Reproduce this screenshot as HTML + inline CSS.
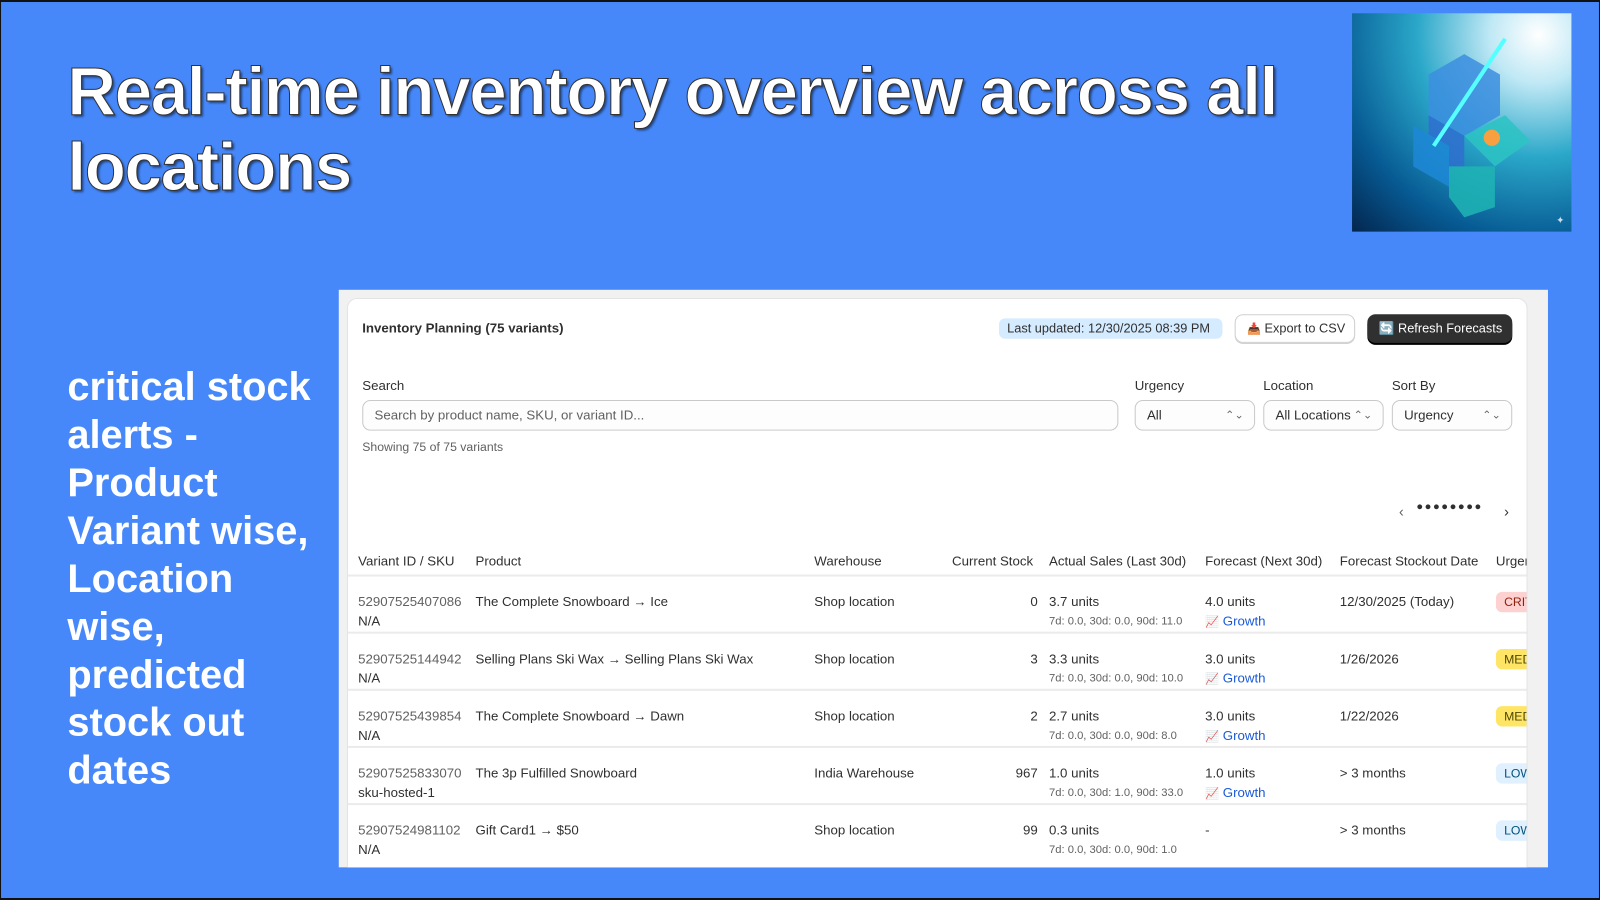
<!DOCTYPE html>
<html><head><meta charset="utf-8"><style>
*{box-sizing:border-box;margin:0;padding:0}
html,body{width:1600px;height:900px;overflow:hidden;background:#000}
#w{position:absolute;left:0;top:0;width:1568px;height:882px;transform:scale(1.020408);transform-origin:0 0;background:#4688fa;font-family:"Liberation Sans",sans-serif;overflow:hidden;box-shadow:inset 0 2px 0 #111,inset 1px 0 0 #111,inset -1px 0 0 #111,inset 0 -2px 0 #111}
.t{position:absolute;left:66px;top:52px;font-size:66px;font-weight:bold;color:#fff;line-height:74px;letter-spacing:-1.3px;-webkit-text-stroke:1px #333;text-shadow:2px 2px 2px rgba(0,0,0,.5)}
.img{position:absolute;left:1325px;top:13px;width:215px;height:214px;background:radial-gradient(circle at 85% 10%,#fff 0%,#bfe8f5 18%,#2aa7c9 45%,#075b94 75%,#03264f 100%)}
.side{position:absolute;left:66px;top:356px;font-size:39px;font-weight:bold;color:#fff;line-height:47px}
.panel{position:absolute;left:332px;top:284px;width:1185px;height:566px;background:#f1f1f1;overflow:hidden}
.card{position:absolute;left:8px;top:8px;width:1157px;height:600px;background:#fff;border-radius:10px;border:1px solid #e3e3e3;overflow:hidden;font-size:13px;color:#303030}
.a{position:absolute;white-space:nowrap}
.inp{position:absolute;top:99px;height:30px;border:1px solid #c9c9c9;border-radius:8px;background:#fdfdfd;padding:0 11px;line-height:28px;font-size:13px}
.arr{position:absolute;right:10px;top:0;color:#666;font-size:11px}
.hr{position:absolute;left:0;width:1157px;height:2px;background:#ebebeb}
.g{color:#616161}
.s{font-size:11px;color:#616161}
.gr{color:#1b5ad8}
.b{position:absolute;left:1125px;height:20px;padding:0 8px;border-radius:6px;font-size:12px;line-height:20px}
</style></head><body><div id="w">
<div class="t">Real-time inventory overview across all<br>locations</div>
<div class="img"><svg width="215" height="214" viewBox="0 0 215 214"><g opacity=".85"><polygon points="110,40 145,60 145,100 110,120 75,100 75,60" fill="#3d8fe0"/><polygon points="75,100 110,120 110,160 75,140" fill="#2f6fd0"/><polygon points="110,120 150,100 175,125 140,150" fill="#2cc4c4"/><polygon points="60,110 95,130 95,170 60,150" fill="#1e88d8"/><polygon points="95,150 140,150 140,190 110,200 95,180" fill="#1fb5b5"/></g><path d="M80 130 L120 70 L150 25" stroke="#5ff" stroke-width="4" fill="none"/><circle cx="137" cy="122" r="8" fill="#f8a040"/><text x="200" y="206" fill="#cde" font-size="10">✦</text></svg></div>
<div class="side">critical stock<br>alerts -<br>Product<br>Variant wise,<br>Location<br>wise,<br>predicted<br>stock out<br>dates</div>
<div class="panel"><div class="card">
<div class="a" style="left:14px;top:21px;font-weight:bold">Inventory Planning (75 variants)</div>
<div class="a" style="left:638px;top:19px;height:20px;width:219px;background:#d5ebff;border-radius:6px;line-height:20px;padding-left:8px;font-size:12.5px">Last updated: 12/30/2025 08:39 PM</div>
<div class="a" style="left:869px;top:15px;height:28px;width:118px;border:1px solid #d0d0d0;border-radius:8px;line-height:26px;padding-left:11px;font-size:12.5px;box-shadow:0 1px 0 #ccc"><span style="color:#d33;font-size:11px">📥</span> Export to CSV</div>
<div class="a" style="left:999px;top:15px;height:28px;width:142px;background:#303030;color:#fff;border-radius:8px;line-height:28px;padding-left:11px;font-size:12.5px;box-shadow:0 2px 0 #000">🔄 Refresh Forecasts</div>
<div class="a" style="left:14px;top:77px">Search</div>
<div class="a" style="left:771px;top:77px">Urgency</div>
<div class="a" style="left:897px;top:77px">Location</div>
<div class="a" style="left:1023px;top:77px">Sort By</div>
<div class="inp g" style="left:14px;width:741px">Search by product name, SKU, or variant ID...</div>
<div class="inp" style="left:771px;width:118px">All<span class="arr">⌃⌄</span></div>
<div class="inp" style="left:897px;width:118px">All Locations<span class="arr">⌃⌄</span></div>
<div class="inp" style="left:1023px;width:118px">Urgency<span class="arr">⌃⌄</span></div>
<div class="a g" style="left:14px;top:138px;font-size:12px">Showing 75 of 75 variants</div>
<div class="a g" style="left:1030px;top:200px;font-size:14px">‹</div>
<div class="a" style="left:1047px;top:198px;font-size:11px;letter-spacing:1.5px">●●●●●●●●</div>
<div class="a" style="left:1133px;top:200px;font-size:14px">›</div>
<div class="a" style="left:10px;top:249px">Variant ID / SKU</div>
<div class="a" style="left:125px;top:249px">Product</div>
<div class="a" style="left:457px;top:249px">Warehouse</div>
<div class="a" style="left:592px;top:249px">Current Stock</div>
<div class="a" style="left:687px;top:249px">Actual Sales (Last 30d)</div>
<div class="a" style="left:840px;top:249px">Forecast (Next 30d)</div>
<div class="a" style="left:972px;top:249px">Forecast Stockout Date</div>
<div class="a" style="left:1125px;top:249px">Urgency</div>
<div class="hr" style="top:270px"></div>
<div class="hr" style="top:326px"></div>
<div class="hr" style="top:382px"></div>
<div class="hr" style="top:438px"></div>
<div class="hr" style="top:494px"></div>

<div class="a g" style="left:10px;top:289px">52907525407086</div><div class="a" style="left:10px;top:308px">N/A</div>
<div class="a" style="left:125px;top:289px">The Complete Snowboard → Ice</div>
<div class="a" style="left:457px;top:289px">Shop location</div>
<div class="a" style="left:592px;top:289px;width:84px;text-align:right">0</div>
<div class="a" style="left:687px;top:289px">3.7 units</div><div class="a s" style="left:687px;top:310px">7d: 0.0, 30d: 0.0, 90d: 11.0</div>
<div class="a" style="left:840px;top:289px">4.0 units</div><div class="a gr" style="left:840px;top:308px"><span style="color:#c33;font-size:11px">📈</span> Growth</div>
<div class="a" style="left:972px;top:289px">12/30/2025 (Today)</div>
<div class="b" style="top:287px;background:#fed1d1;color:#8e1f0b">CRITICAL</div>

<div class="a g" style="left:10px;top:345px">52907525144942</div><div class="a" style="left:10px;top:364px">N/A</div>
<div class="a" style="left:125px;top:345px">Selling Plans Ski Wax → Selling Plans Ski Wax</div>
<div class="a" style="left:457px;top:345px">Shop location</div>
<div class="a" style="left:592px;top:345px;width:84px;text-align:right">3</div>
<div class="a" style="left:687px;top:345px">3.3 units</div><div class="a s" style="left:687px;top:366px">7d: 0.0, 30d: 0.0, 90d: 10.0</div>
<div class="a" style="left:840px;top:345px">3.0 units</div><div class="a gr" style="left:840px;top:364px"><span style="color:#c33;font-size:11px">📈</span> Growth</div>
<div class="a" style="left:972px;top:345px">1/26/2026</div>
<div class="b" style="top:343px;background:#ffe566;color:#4f4700">MEDIUM</div>

<div class="a g" style="left:10px;top:401px">52907525439854</div><div class="a" style="left:10px;top:420px">N/A</div>
<div class="a" style="left:125px;top:401px">The Complete Snowboard → Dawn</div>
<div class="a" style="left:457px;top:401px">Shop location</div>
<div class="a" style="left:592px;top:401px;width:84px;text-align:right">2</div>
<div class="a" style="left:687px;top:401px">2.7 units</div><div class="a s" style="left:687px;top:422px">7d: 0.0, 30d: 0.0, 90d: 8.0</div>
<div class="a" style="left:840px;top:401px">3.0 units</div><div class="a gr" style="left:840px;top:420px"><span style="color:#c33;font-size:11px">📈</span> Growth</div>
<div class="a" style="left:972px;top:401px">1/22/2026</div>
<div class="b" style="top:399px;background:#ffe566;color:#4f4700">MEDIUM</div>

<div class="a g" style="left:10px;top:457px">52907525833070</div><div class="a" style="left:10px;top:476px">sku-hosted-1</div>
<div class="a" style="left:125px;top:457px">The 3p Fulfilled Snowboard</div>
<div class="a" style="left:457px;top:457px">India Warehouse</div>
<div class="a" style="left:592px;top:457px;width:84px;text-align:right">967</div>
<div class="a" style="left:687px;top:457px">1.0 units</div><div class="a s" style="left:687px;top:478px">7d: 0.0, 30d: 1.0, 90d: 33.0</div>
<div class="a" style="left:840px;top:457px">1.0 units</div><div class="a gr" style="left:840px;top:476px"><span style="color:#c33;font-size:11px">📈</span> Growth</div>
<div class="a" style="left:972px;top:457px">&gt; 3 months</div>
<div class="b" style="top:455px;background:#e0f0ff;color:#00527c">LOW</div>

<div class="a g" style="left:10px;top:513px">52907524981102</div><div class="a" style="left:10px;top:532px">N/A</div>
<div class="a" style="left:125px;top:513px">Gift Card1 → $50</div>
<div class="a" style="left:457px;top:513px">Shop location</div>
<div class="a" style="left:592px;top:513px;width:84px;text-align:right">99</div>
<div class="a" style="left:687px;top:513px">0.3 units</div><div class="a s" style="left:687px;top:534px">7d: 0.0, 30d: 0.0, 90d: 1.0</div>
<div class="a" style="left:840px;top:513px">-</div>
<div class="a" style="left:972px;top:513px">&gt; 3 months</div>
<div class="b" style="top:511px;background:#e0f0ff;color:#00527c">LOW</div>
</div></div>
</div></body></html>
